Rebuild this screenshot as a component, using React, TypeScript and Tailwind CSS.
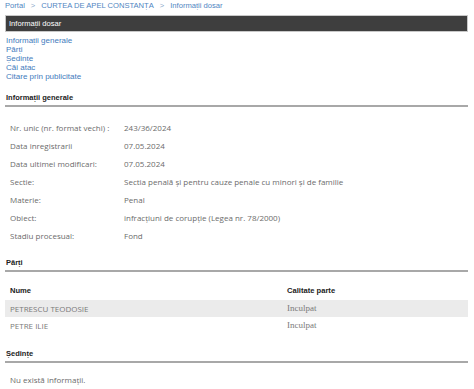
import React from "react";

const general = [
  ["Nr. unic (nr. format vechi) :", "243/36/2024"],
  ["Data inregistrarii", "07.05.2024"],
  ["Data ultimei modificari:", "07.05.2024"],
  ["Sectie:", "Sectia penală și pentru cauze penale cu minori și de familie"],
  ["Materie:", "Penal"],
  ["Obiect:", "infracțiuni de corupție (Legea nr. 78/2000)"],
  ["Stadiu procesual:", "Fond"],
];

const parti = [
  { nume: "PETRESCU TEODOSIE", calitate: "Inculpat" },
  { nume: "PETRE ILIE", calitate: "Inculpat" },
];

const links = ["Informații generale", "Părți", "Ședințe", "Căi atac", "Citare prin publicitate"];

function SectionTitle({ children, className = "" }: { children: React.ReactNode; className?: string }) {
  return (
    <div className={"border-b-2 border-[#a8a8a8] pb-[2px] pl-[1px] text-[7.5px] leading-[10px] font-bold text-[#222] " + className}>
      {children}
    </div>
  );
}

export default function App() {
  return (
    <div className="w-[474px] h-[389px] bg-white pl-[5px] pr-[6px] overflow-hidden font-['Liberation_Sans',Arial,sans-serif]">
      {/* breadcrumb */}
      <div className="h-[11px] flex items-center text-[7.6px] leading-[11px] text-[#4f86c2]">
        <span>Portal</span>
        <span className="mx-[6px] text-[#8aa8c8]">&gt;</span>
        <span>CURTEA DE APEL CONSTANȚA</span>
        <span className="mx-[6px] text-[#8aa8c8]">&gt;</span>
        <span>Informații dosar</span>
      </div>

      <div className="mt-[4px] h-[17px] bg-[#3e3e3e] border border-[#c8c8c8] px-[3px] text-[7.6px] leading-[15px] text-white">
        Informații dosar
      </div>

      <div className="mt-[4px] pl-[1px] flex flex-col text-[8px] leading-[9px] text-[#3f7bbd]">
        {links.map((l) => (
          <span key={l}>{l}</span>
        ))}
      </div>

      <SectionTitle className="mt-[12px]">Informații generale</SectionTitle>

      <div className="mt-[12px] font-['Open_Sans',sans-serif] text-[8px] text-[#6b6b6b]">
        {general.map(([k, v]) => (
          <div key={k} className="flex h-[18px] items-center">
            <span className="w-[119px] pl-[5px] shrink-0">{k}</span>
            <span>{v}</span>
          </div>
        ))}
      </div>

      <SectionTitle className="mt-[13px]">Părți</SectionTitle>

      <div className="mt-[11px]">
        <div className="flex h-[16px] items-center text-[7.6px] font-bold text-[#222]">
          <span className="w-[282px] pl-[5px]">Nume</span>
          <span>Calitate parte</span>
        </div>
        <div className="mt-[1px]">
          {parti.map((p, i) => (
            <div key={p.nume} className={"flex h-[17px] items-center " + (i === 0 ? "bg-[#ebebeb]" : "")}>
              <span className="w-[282px] pl-[5px] font-['Open_Sans',sans-serif] text-[8px] text-[#7a7a7a]">{p.nume}</span>
              <span className="font-['Liberation_Serif',serif] text-[9px] text-[#7a7a7a]">{p.calitate}</span>
            </div>
          ))}
        </div>
      </div>

      <SectionTitle className="mt-[15px]">Ședințe</SectionTitle>

      <div className="mt-[9px] h-[16px] flex items-center pl-[5px] font-['Open_Sans',sans-serif] text-[8px] text-[#6b6b6b]">
        Nu există informații.
      </div>
    </div>
  );
}
